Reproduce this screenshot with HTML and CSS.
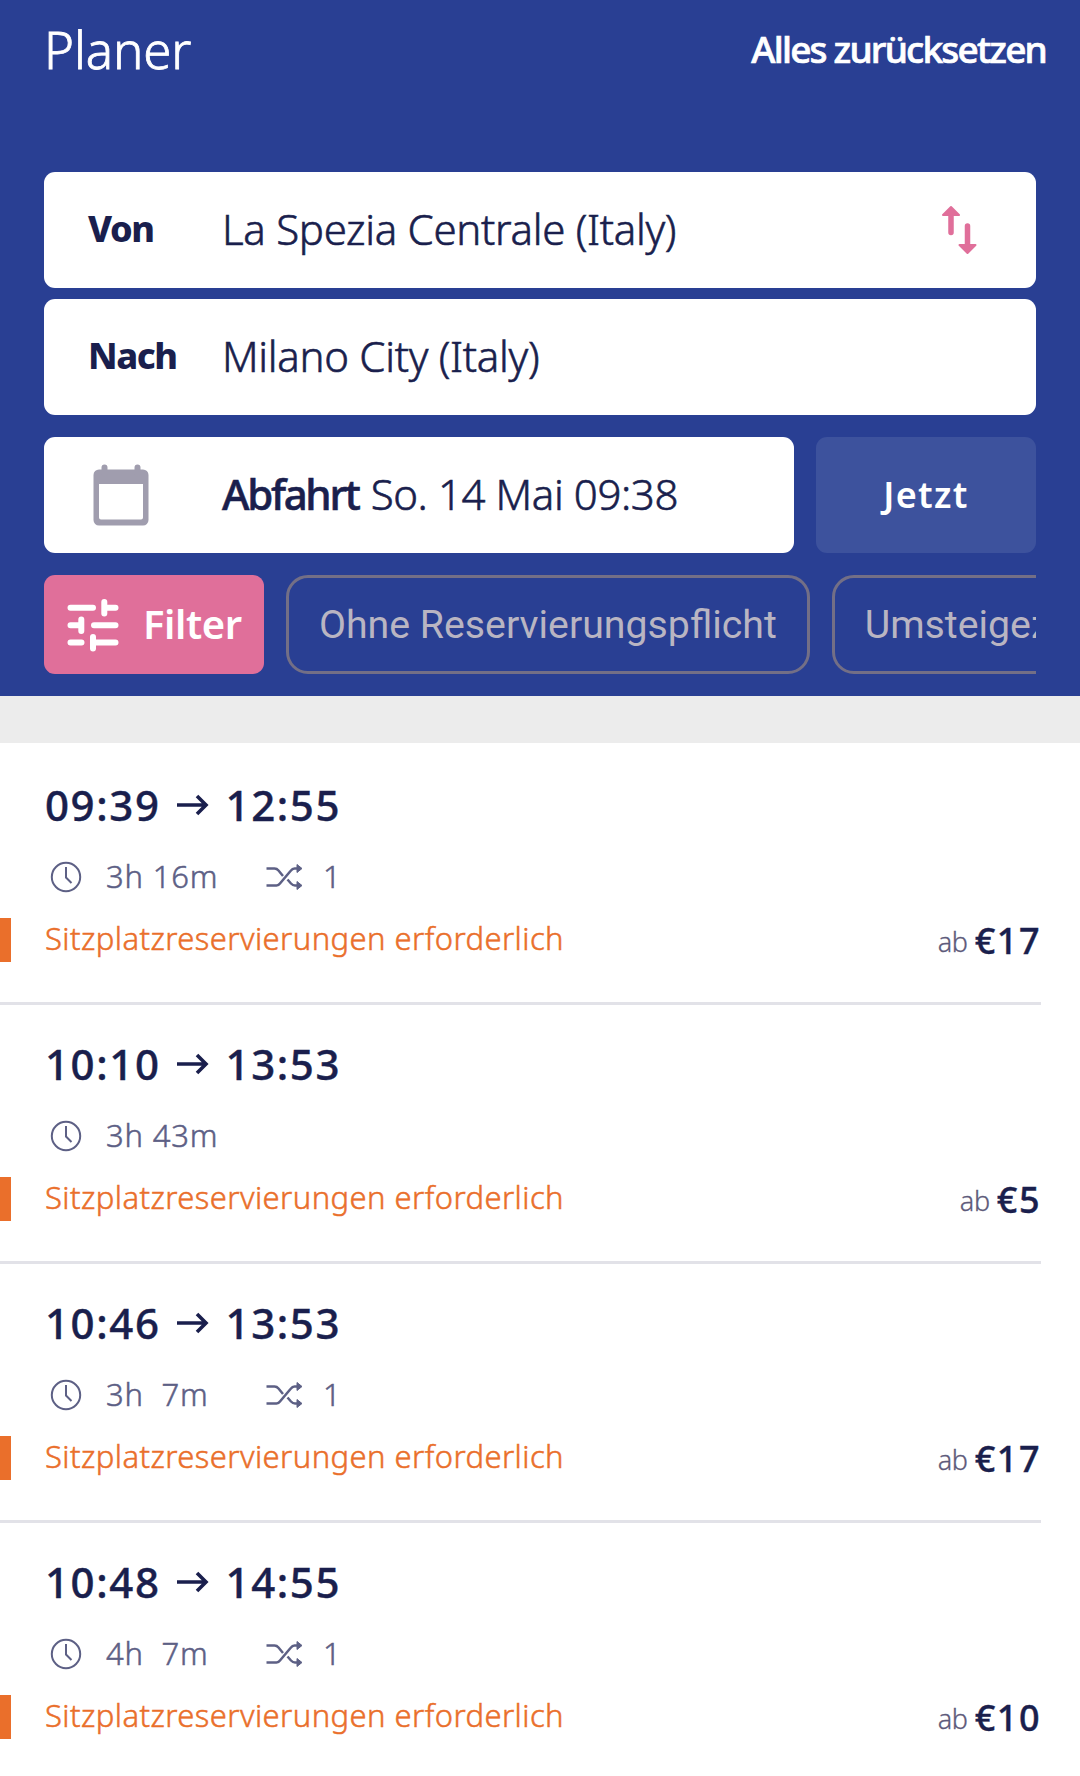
FILE: index.html
```html
<!DOCTYPE html>
<html lang="de">

<head>
    <meta charset="UTF-8">
    <meta name="viewport" content="width=device-width, initial-scale=1.0">
    <title>Planer</title>
    <link rel="stylesheet" href="styles.css">
</head>

<body>
    <!-- Shared icons -->
    <svg class="sprite" width="0" height="0">
        <symbol id="clock" viewBox="0 0 32 32">
            <circle cx="16" cy="16" r="14.2" />
            <path d="M16 6v10.500l5.500 5.500" />
        </symbol>
        <symbol id="shuffle" viewBox="0 0 38 28">
            <path d="M1.500 5.500h8c2 0 3 .8 4 2l4.500 5.500M1.500 22.500h10c1.500 0 2.700-.8 3.700-2.200L25.500 8c1.200-1.500 2-2.500 4-2.500h3M22.500 16.500l3.500 4c1.200 1.300 2 2 4 2h2.500" />
            <path class="tip" d="M32 1.500l5 4-5 4zM32 18.500l5 4-5 4z" />
        </symbol>
    </svg>

    <header>
        <div class="title-bar">
            <h1>Planer</h1>
            <a class="reset" href="#">Alles zurücksetzen</a>
        </div>

        <div class="field">
            <span class="label">Von</span>
            <span class="value">La Spezia Centrale (Italy)</span>
            <svg class="swap" width="38" height="50" viewBox="0 0 38 50">
                <path class="line" d="M10 9v18.500M26.500 21v20" />
                <path class="head" d="M10 2l8 8H2zM26.500 48l8-8h-16z" />
            </svg>
        </div>
        <div class="field">
            <span class="label">Nach</span>
            <span class="value">Milano City (Italy)</span>
        </div>

        <div class="date-row">
            <div class="field date">
                <svg class="calendar" width="56" height="62" viewBox="0 0 56 62">
                    <path fill-rule="evenodd" d="M6 5.500H50a5.500 5.500 0 0 1 5.500 5.500V56a5.500 5.500 0 0 1-5.500 5.500H6A5.500 5.500 0 0 1 .5 56V11A5.500 5.500 0 0 1 6 5.500zM6 20V53.500a2 2 0 0 0 2 2H48a2 2 0 0 0 2-2V20z" />
                    <path class="pin" d="M11.500 3.500v6M44.500 3.500v6" />
                </svg>
                <span class="value"><b>Abfahrt</b><span class="when">So. 14 Mai 09:38</span></span>
            </div>
            <button class="now">Jetzt</button>
        </div>

        <div class="filters">
            <button class="filter">
                <svg width="52" height="54" viewBox="0 0 52 54">
                    <path d="M3.500 9.700H26M41 9.700H48.500M37.300 4V15.500M3.500 27.200H14M14.300 21.500V33M27 27.200H48.500M3.500 44.500H14.500M26 39V50.500M26 44.500H48.500" />
                </svg>
                <span>Filter</span>
            </button>
            <span class="chip">Ohne Reservierungspflicht</span>
            <span class="chip">Umsteigezeit</span>
        </div>
    </header>

    <main>
        <section class="trip">
            <h2><span>09:39</span><svg class="arrow" width="32" height="22" viewBox="0 0 32 22"><path d="M0 11h29M20 2l9 9-9 9" /></svg><span>12:55</span></h2>
            <p class="meta"><svg class="clock"><use href="#clock" /></svg><span class="duration">3h 16m</span><svg class="shuffle"><use href="#shuffle" /></svg><span>1</span></p>
            <div class="notice"><span class="seats">Sitzplatzreservierungen erforderlich</span><span class="ab">ab</span><span class="price">€17</span></div>
        </section>
        <section class="trip">
            <h2><span>10:10</span><svg class="arrow" width="32" height="22" viewBox="0 0 32 22"><path d="M0 11h29M20 2l9 9-9 9" /></svg><span>13:53</span></h2>
            <p class="meta"><svg class="clock"><use href="#clock" /></svg><span class="duration">3h 43m</span></p>
            <div class="notice"><span class="seats">Sitzplatzreservierungen erforderlich</span><span class="ab">ab</span><span class="price">€5</span></div>
        </section>
        <section class="trip">
            <h2><span>10:46</span><svg class="arrow" width="32" height="22" viewBox="0 0 32 22"><path d="M0 11h29M20 2l9 9-9 9" /></svg><span>13:53</span></h2>
            <p class="meta"><svg class="clock"><use href="#clock" /></svg><span class="duration">3h&nbsp; 7m</span><svg class="shuffle"><use href="#shuffle" /></svg><span>1</span></p>
            <div class="notice"><span class="seats">Sitzplatzreservierungen erforderlich</span><span class="ab">ab</span><span class="price">€17</span></div>
        </section>
        <section class="trip">
            <h2><span>10:48</span><svg class="arrow" width="32" height="22" viewBox="0 0 32 22"><path d="M0 11h29M20 2l9 9-9 9" /></svg><span>14:55</span></h2>
            <p class="meta"><svg class="clock"><use href="#clock" /></svg><span class="duration">4h&nbsp; 7m</span><svg class="shuffle"><use href="#shuffle" /></svg><span>1</span></p>
            <div class="notice"><span class="seats">Sitzplatzreservierungen erforderlich</span><span class="ab">ab</span><span class="price">€10</span></div>
        </section>
    </main>
</body>
</html>
```
FILE: styles.css
```css
* {
    box-sizing: border-box;
}

body {
    font-family: 'Noto Sans', sans-serif;
    margin: 0;
    height: 1776px;
    overflow: hidden;
    background-color: #ffffff;
    color: #1a1f4d;
}

.sprite {
    display: block;
}

svg {
    flex: none;
}

header {
    height: 696px;
    padding: 0 44px;
    background-color: #293f93;
}

.title-bar {
    display: flex;
    justify-content: space-between;
    height: 172px;
    margin-right: -10px;
    color: white;
}

.title-bar h1 {
    margin: 0;
    font-size: 51px;
    font-weight: 300;
    line-height: 99px;
    letter-spacing: -0.1px;
    -webkit-text-stroke: 0.8px;
}

.reset {
    color: white;
    font-size: 37px;
    font-weight: 500;
    line-height: 98px;
    letter-spacing: -1.8px;
    text-decoration: none;
    -webkit-text-stroke: 0.7px;
}

.field {
    display: flex;
    align-items: center;
    height: 116px;
    margin-bottom: 11px;
    padding-left: 44px;
    background-color: white;
    border-radius: 11px;
}

.label {
    width: 134px;
    padding-bottom: 4px;
    font-size: 36px;
    font-weight: 800;
    letter-spacing: -1.4px;
}

.value {
    padding-bottom: 4px;
    font-size: 42px;
    font-weight: 300;
    letter-spacing: -0.3px;
    white-space: nowrap;
    -webkit-text-stroke: 0.6px;
}

.value b {
    font-weight: 500;
    letter-spacing: -2.3px;
}

.when {
    margin-left: 12px;
    letter-spacing: -0.4px;
}

.swap {
    margin: 0 57px 0 auto;
}

.swap .line {
    stroke: #e06f9a;
    stroke-width: 5.5;
    stroke-linecap: round;
}

.swap .head {
    fill: #e06f9a;
    stroke: #e06f9a;
    stroke-width: 2;
    stroke-linejoin: round;
}

.date-row {
    display: flex;
    gap: 22px;
    margin-top: 22px;
}

.date {
    width: 750px;
    margin: 0;
    padding-left: 49px;
}

.calendar {
    margin-right: 73px;
    fill: #a09dae;
}

.calendar .pin {
    stroke: #a09dae;
    stroke-width: 6;
    stroke-linecap: round;
}

button {
    padding: 0;
    border: none;
    border-radius: 11px;
    color: white;
    font-family: inherit;
    font-weight: 600;
}

.now {
    width: 220px;
    padding-bottom: 2px;
    background-color: #3d529d;
    font-size: 36px;
    letter-spacing: 1.3px;
}

.filters {
    display: flex;
    gap: 22px;
    height: 99px;
    margin-top: 22px;
    overflow: hidden;
}

.filter {
    display: flex;
    flex: none;
    align-items: center;
    gap: 24px;
    width: 220px;
    padding-left: 23px;
    background-color: #e06f9a;
    font-size: 40px;
    letter-spacing: -0.4px;
}

.filter span {
    padding-bottom: 2px;
}

.filter svg {
    stroke: white;
    stroke-width: 6;
    stroke-linecap: round;
}

.chip {
    flex: none;
    padding: 0 30px;
    border: 3px solid #736f86;
    border-radius: 22px;
    color: #b9b5c2;
    font-family: Roboto, sans-serif;
    font-size: 39.25px;
    line-height: 95px;
}

main {
    padding-top: 3px;
    border-top: 47px solid #ececec;
}

.trip {
    width: 1041px;
    height: 259px;
    padding-top: 29px;
    border-bottom: 3px solid #e2e2e8;
}

.trip h2 {
    display: flex;
    align-items: center;
    margin: 0 0 22px 45px;
    font-size: 42px;
    font-weight: 500;
    line-height: 60px;
    letter-spacing: 1.6px;
    -webkit-text-stroke: 0.4px;
}

.arrow {
    margin: 0 17px 0 16px;
    fill: none;
    stroke: #1a1f4d;
    stroke-width: 3.6;
}

.meta {
    display: flex;
    align-items: center;
    height: 40px;
    margin: 0 0 21px 50px;
    color: #5d6085;
    font-size: 31px;
    font-weight: 300;
    line-height: 40px;
    letter-spacing: 0.8px;
    -webkit-text-stroke: 0.5px;
}

.meta span {
    padding-bottom: 2px;
}

.clock {
    width: 32px;
    height: 32px;
    margin-right: 24px;
    fill: none;
    stroke: #5d6085;
    stroke-width: 2;
}

.duration {
    width: 159px;
}

.shuffle {
    width: 38px;
    height: 28px;
    margin-right: 20px;
    fill: none;
    stroke: #5d6085;
    stroke-width: 2.5;
}

.tip {
    fill: #5d6085;
    stroke-width: 1;
}

.notice {
    display: flex;
    align-items: center;
    height: 44px;
    border-left: 11px solid #ea6f2b;
    line-height: 46px;
}

.seats {
    margin-right: auto;
    padding: 0 0 5px 34px;
    color: #ea6f2b;
    font-size: 31px;
    font-weight: 300;
    letter-spacing: 0.43px;
    -webkit-text-stroke: 0.5px;
}

.ab {
    margin-right: 7px;
    padding-top: 3px;
    color: #5d5a7a;
    font-size: 27px;
    font-weight: 300;
    letter-spacing: -0.3px;
    -webkit-text-stroke: 0.3px;
}

.price {
    padding-top: 2px;
    font-size: 36px;
    font-weight: 500;
    letter-spacing: 1.5px;
    -webkit-text-stroke: 0.4px;
}
```
